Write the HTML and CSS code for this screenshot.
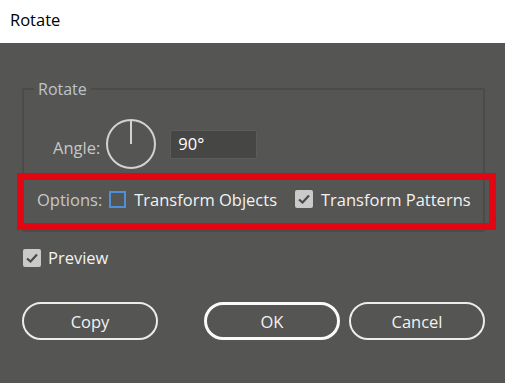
FILE: index.html
```html
<!DOCTYPE html>
<html>
<head>
  <meta name="viewport" content="width=device-width, initial-scale=1.0">
  <link rel="stylesheet" href="styles.css">
</head>
<body>
  <div class="titlebar">Rotate</div>

  <div class="dialog">
    <fieldset class="group">
      <legend>Rotate</legend>

      <div class="angle-row">
        <span class="label">Angle:</span>
        <svg class="dial" width="52" height="52" viewBox="0 0 52 52">
          <circle cx="26" cy="26" r="24" fill="none" stroke="#d2d2d2" stroke-width="2"/>
          <line x1="26" y1="2" x2="26" y2="26" stroke="#d2d2d2" stroke-width="2"/>
        </svg>
        <div class="angle-input">90°</div>
      </div>

      <div class="options-row">
        <span class="label">Options:</span>
        <span class="check"></span>
        <span class="text">Transform Objects</span>
        <span class="check checked">
          <svg width="12" height="10" viewBox="0 0 12 10"><path d="M1 5.5 L4.5 8.5 L11 1.5" fill="none" stroke="#4a4a4a" stroke-width="2.2"/></svg>
        </span>
        <span class="text">Transform Patterns</span>
      </div>
    </fieldset>

    <div class="preview-row">
      <span class="check checked">
        <svg width="12" height="10" viewBox="0 0 12 10"><path d="M1 5.5 L4.5 8.5 L11 1.5" fill="none" stroke="#4a4a4a" stroke-width="2.2"/></svg>
      </span>
      <span class="text">Preview</span>
    </div>

    <div class="buttons">
      <button class="btn">Copy</button>
      <div class="right-btns">
        <button class="btn btn-default">OK</button>
        <button class="btn">Cancel</button>
      </div>
    </div>
  </div>
</body>
</html>
```

FILE: styles.css
```css
body {
  margin: 0;
  padding: 0;
  background: #fff;
  font-family: "Open Sans", sans-serif;
  width: 506px;
  height: 385px;
  overflow: hidden;
}

.titlebar {
  height: 43px;
  box-sizing: border-box;
  padding: 9px 0 0 10px;
  font-size: 16.5px;
  line-height: 22px;
  color: #000;
}

.dialog {
  width: 505px;
  height: 340px;
  box-sizing: border-box;
  background: #555553;
  padding: 35px 0 0 22px;
  color: #f2f2f2;
  font-size: 16.5px;
}

.group {
  width: 463px;
  height: 154px;
  box-sizing: border-box;
  margin: 0;
  padding: 0;
  border: 2px solid #4b4b49;
  border-radius: 2px;
}

.group legend {
  margin-left: 10px;
  padding: 0 4px;
  color: #bcc4cb;
  font-size: 16px;
  line-height: 22px;
}

.label {
  color: #c6c8c8;
}

.angle-row {
  display: flex;
  align-items: center;
  gap: 5px;
  padding: 18px 0 0 29px;
}

.angle-row .label {
  padding-top: 7px;
}

.angle-input {
  width: 87px;
  height: 29px;
  box-sizing: border-box;
  margin-left: 8px;
  padding: 2px 0 0 7px;
  background: #464645;
  border: 1px solid #5c5c5b;
  border-radius: 2px;
  color: #fff;
  line-height: 22px;
}

.options-row {
  position: relative;
  display: flex;
  align-items: center;
  height: 40px;
  box-sizing: border-box;
  margin: 12px -13px 0 -7px;
  padding: 0 0 6px 20px;
}

/* red annotation frame drawn over the row */
.options-row::after {
  content: '';
  position: absolute;
  left: 0;
  top: -9px;
  right: 0;
  bottom: -8px;
  border: 7px solid #e20613;
}

.check {
  display: inline-flex;
  align-items: center;
  justify-content: center;
  width: 17px;
  height: 17px;
  box-sizing: border-box;
  border: 2px solid #4d8fd8;
  margin: 0 8px 0 7px;
}

.check.checked {
  width: 18px;
  height: 18px;
  border: none;
  border-radius: 2px;
  background: #cacaca;
}

.options-row .check.checked {
  margin-left: 18px;
}

.preview-row {
  display: flex;
  align-items: center;
  margin-top: 14px;
}

.preview-row .check {
  margin: 0 7px 0 1px;
}

.buttons {
  display: flex;
  justify-content: space-between;
  width: 463px;
  margin-top: 33px;
}

.right-btns {
  display: flex;
  gap: 9px;
}

.btn {
  width: 136px;
  height: 38px;
  box-sizing: border-box;
  background: transparent;
  border: 2px solid #ececec;
  border-radius: 19px;
  color: #f2f2f2;
  font-family: "Open Sans", sans-serif;
  font-size: 16.5px;
  padding: 0;
}

.btn-default {
  border-width: 3px;
  border-color: #fafafa;
}
```
